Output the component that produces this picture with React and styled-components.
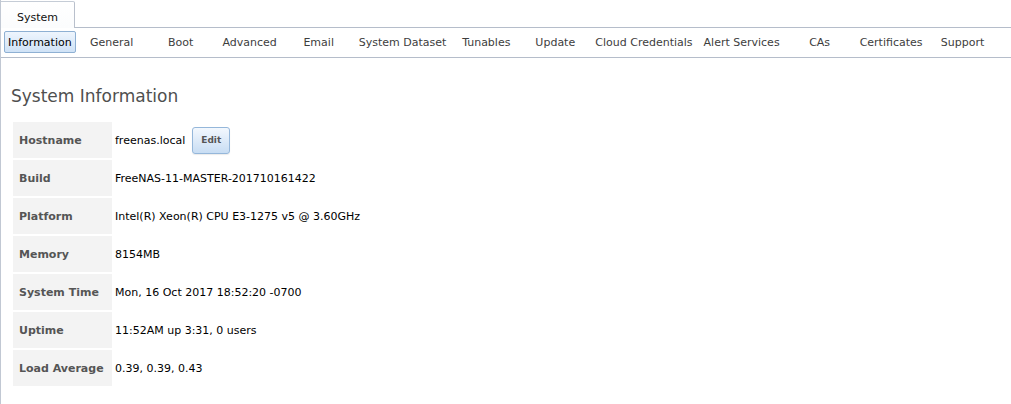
import React from 'react';
import styled, { createGlobalStyle } from 'styled-components';

const GlobalStyle = createGlobalStyle`
  html, body {
    margin: 0;
    padding: 0;
    background: #fff;
  }
  body {
    font-family: "DejaVu Sans", Verdana, sans-serif;
    font-size: 11px;
    color: #000;
  }
`

const Page = styled.div`
  min-height: 404px;
  border-left: 1px solid #c1c8d3;
  box-sizing: border-box;
`

const TabBar = styled.div`
  display: flex;
  align-items: flex-end;
  height: 28px;
`

const TopTab = styled.div`
  height: 26px;
  line-height: 32px;
  padding: 0 16px 0 16px;
  border-top: 1px solid #c5ccd6;
  border-right: 1px solid #b9c0cc;
  border-top-right-radius: 2px;
  background: linear-gradient(#ffffff, #fbfcfd);
  color: #111;
  font-size: 11px;
`

const TabFiller = styled.div`
  flex: 1;
  border-bottom: 1px solid #b5bdca;
`

const SubTabs = styled.div`
  display: flex;
  gap: 3px;
  padding: 3px 3px 4px 3px;
  border-bottom: 1px solid #b5bdca;
`

const SubTab = styled.div`
  box-sizing: border-box;
  min-width: 66px;
  height: 22px;
  line-height: 21px;
  padding: 0 3px;
  text-align: center;
  white-space: nowrap;
  border: 1px solid ${p => (p.$active ? '#8eb0d3' : 'transparent')};
  border-radius: 2px;
  background: ${p => (p.$active ? 'linear-gradient(#eef5fd, #cfe2f6)' : 'transparent')};
  color: ${p => (p.$active ? '#000' : '#3d3d3d')};
  font-size: 11px;
`

const Content = styled.div`
  padding: 28px 0 0 10px;
`

const Heading = styled.h2`
  margin: 0 0 14px 0;
  font-size: 17px;
  line-height: 20px;
  font-weight: normal;
  color: #4f4f4f;
`

const InfoTable = styled.table`
  border-collapse: separate;
  border-spacing: 2px;
`

const LabelCell = styled.td`
  box-sizing: border-box;
  width: 99px;
  height: 36px;
  padding: 0 6px;
  background: #f3f3f3;
  color: #555;
  font-weight: bold;
  font-size: 11px;
  white-space: nowrap;
`

const ValueCell = styled.td`
  padding: 0 1px;
  font-size: 11px;
  color: #000;
  white-space: nowrap;
`

const ValueRow = styled.div`
  display: flex;
  align-items: center;
`

const EditButton = styled.button`
  box-sizing: border-box;
  width: 38px;
  height: 27px;
  margin-left: 7px;
  padding: 0;
  border: 1px solid #95b7da;
  border-radius: 3px;
  background: linear-gradient(#f3f8fe, #c8ddf3);
  box-shadow: 0 1px 1px rgba(0, 0, 0, 0.08);
  color: #555;
  font-family: "DejaVu Sans", Verdana, sans-serif;
  font-size: 9px;
  font-weight: bold;
`

const tabs = [
  'Information', 'General', 'Boot', 'Advanced', 'Email', 'System Dataset',
  'Tunables', 'Update', 'Cloud Credentials', 'Alert Services', 'CAs',
  'Certificates', 'Support',
];

const info = [
  ['Build', 'FreeNAS-11-MASTER-201710161422'],
  ['Platform', 'Intel(R) Xeon(R) CPU E3-1275 v5 @ 3.60GHz'],
  ['Memory', '8154MB'],
  ['System Time', 'Mon, 16 Oct 2017 18:52:20 -0700'],
  ['Uptime', '11:52AM up 3:31, 0 users'],
  ['Load Average', '0.39, 0.39, 0.43'],
];

export default function App() {
  return (
    <>
      <GlobalStyle />
      <Page>
        <TabBar>
          <TopTab>System</TopTab>
          <TabFiller />
        </TabBar>
        <SubTabs>
          {tabs.map((t, i) => (
            <SubTab key={t} $active={i === 0}>{t}</SubTab>
          ))}
        </SubTabs>
        <Content>
          <Heading>System Information</Heading>
          <InfoTable>
            <tbody>
              <tr>
                <LabelCell>Hostname</LabelCell>
                <ValueCell>
                  <ValueRow>
                    freenas.local
                    <EditButton>Edit</EditButton>
                  </ValueRow>
                </ValueCell>
              </tr>
              {info.map(([label, value]) => (
                <tr key={label}>
                  <LabelCell>{label}</LabelCell>
                  <ValueCell>{value}</ValueCell>
                </tr>
              ))}
            </tbody>
          </InfoTable>
        </Content>
      </Page>
    </>
  );
}
